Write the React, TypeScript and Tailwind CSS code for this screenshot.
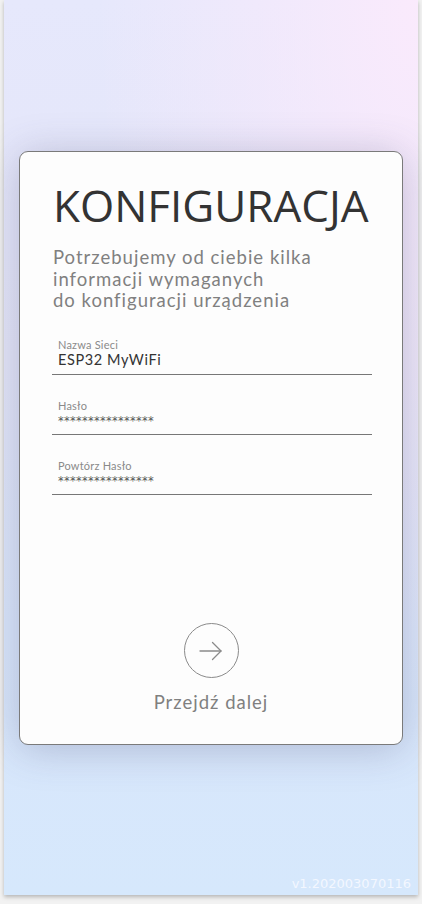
import React from "react";

function Field({ label, value, stars }: { label: string; value: string; stars?: boolean }) {
  return (
    <div className="flex flex-col border-b border-[#777] pl-[6px] pb-[5px]">
      <span className="font-['Lato',sans-serif] text-[11px] leading-[13px] tracking-[0.2px] text-[#8a8a8a]">{label}</span>
      {stars ? (
        <span className="mt-[1px] font-['DejaVu_Sans',sans-serif] text-[11.5px] leading-[16px] tracking-[0.25px] text-[#555]">{value}</span>
      ) : (
        <span className="font-['Lato',sans-serif] text-[14.5px] leading-[18px] tracking-[0.6px] text-[#333]">{value}</span>
      )}
    </div>
  );
}

export default function App() {
  return (
    <div className="h-[904px] w-full overflow-hidden bg-[#f2f2f2]">
      <div className="relative mx-[4px] flex h-[895px] flex-col bg-[radial-gradient(ellipse_at_100%_0%,rgba(250,234,252,1)_0%,rgba(250,234,252,0)_55%),linear-gradient(to_bottom,#e6e8fc_0%,#e3e5f8_40%,#d9e6fb_70%,#d6e8fc_100%)] shadow-[0_2px_4px_rgba(0,0,0,0.25)]">
        <div className="ml-[15px] mt-[151px] flex h-[594px] w-[384px] flex-col rounded-[9px] border border-[#7a7a7a] bg-[#fdfdfd] px-[33px] shadow-[0_4px_40px_rgba(70,70,110,0.28)]">
          <h1 className="mt-[31px] font-['Open_Sans',sans-serif] text-[44px] leading-[44px] text-[#333]">KONFIGURACJA</h1>
          <p className="mt-[20px] font-['Lato',sans-serif] text-[18.5px] leading-[21.5px] tracking-[1px] text-[#808080]">
            Potrzebujemy od ciebie kilka
            <br />
            informacji wymaganych
            <br />
            do konfiguracji urządzenia
          </p>
          <div className="-ml-[1px] mt-[26px] flex w-[320px] flex-col gap-[24px]">
            <Field label="Nazwa Sieci" value="ESP32 MyWiFi" />
            <Field label="Hasło" value="****************" stars />
            <Field label="Powtórz Hasło" value="****************" stars />
          </div>
          <div className="mb-[31px] mt-auto flex flex-col items-center">
            <div className="flex h-[55px] w-[55px] items-center justify-center rounded-full border border-[#8a8a8a]">
              <svg width="24" height="20" viewBox="0 0 24 20" fill="none" stroke="#8a8a8a" strokeWidth="1.3" strokeLinecap="round" strokeLinejoin="round">
                <path d="M1 10 H22" />
                <path d="M13.5 1.5 L22 10 L13.5 18.5" />
              </svg>
            </div>
            <span className="mt-[13px] font-['Lato',sans-serif] text-[18.5px] leading-[22px] tracking-[1px] text-[#808080]">Przejdź dalej</span>
          </div>
        </div>
        <div className="mb-[3px] mr-[7px] mt-auto self-end font-['DejaVu_Sans',sans-serif] text-[13px] leading-[16px] text-[#f3f7ff]">
          v1.202003070116
        </div>
      </div>
    </div>
  );
}
